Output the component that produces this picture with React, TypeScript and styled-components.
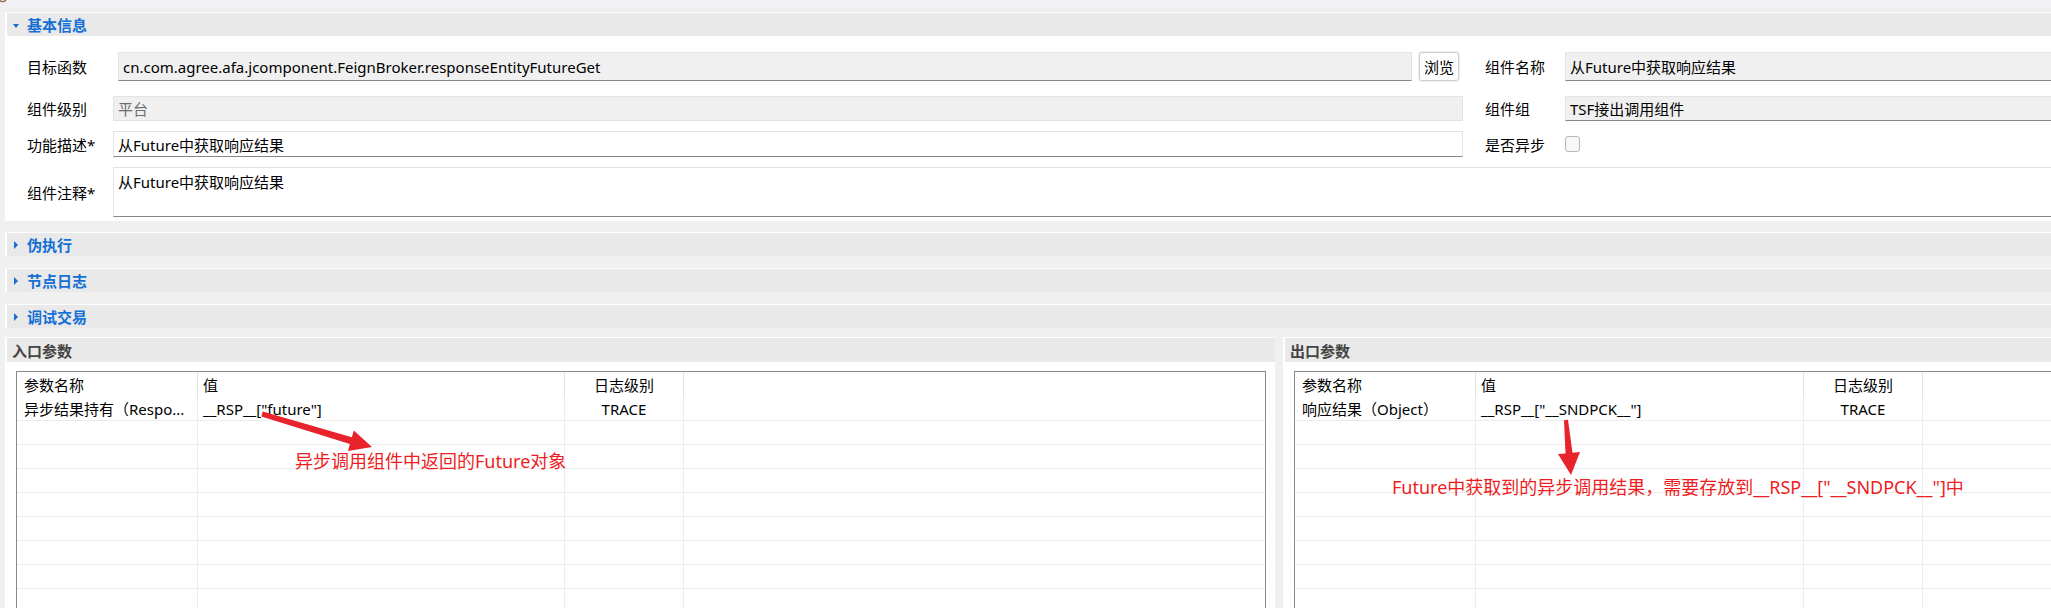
import React from 'react';
import styled, { createGlobalStyle } from 'styled-components';

const FONT = `"Noto Sans", "Noto Sans CJK SC", sans-serif`;

const GlobalStyle = createGlobalStyle`
  html, body { margin: 0; padding: 0; background: #f0f0f0; }
  body { font-family: ${FONT}; font-size: 15px; color: #000; }
  #root { width: 2051px; height: 608px; overflow: hidden; position: relative; }
  * { box-sizing: border-box; }
`;

const TopStrip = styled.div`
  height: 12px;
  position: relative;
  background: linear-gradient(to bottom, #eff0f5 0, #f3f1f4 7px, #efefef 7px, #efefef 12px);
`;

const CornerIcon = styled.svg`
  position: absolute;
  left: 0;
  top: 0;
`;

const Page = styled.div`
  display: flex;
  flex-direction: column;
  padding-left: 5px;
  width: 2080px;
`;

const Panel = styled.section<{ $mt?: number }>`
  background: #fff;
  border-top: 1px solid #fff;
  border-left: 2px solid #fff;
  margin-top: ${(p) => p.$mt ?? 0}px;
`;

const Header = styled.div<{ $plain?: boolean }>`
  height: ${(p) => (p.$plain ? 24 : 23)}px;
  background: #e9e9e9;
  display: flex;
  align-items: center;
  padding-left: ${(p) => (p.$plain ? 5 : 6)}px;
  gap: 8px;
  font-weight: bold;
  font-size: 15px;
  color: ${(p) => (p.$plain ? '#444' : '#1570d5')};
`;

const Caret = styled.span<{ $open?: boolean }>`
  width: 0;
  height: 0;
  ${(p) =>
    p.$open
      ? `border-left: 3px solid transparent; border-right: 3px solid transparent; border-top: 4px solid #1570d5; margin-top: 2px;`
      : `border-top: 4px solid transparent; border-bottom: 4px solid transparent; border-left: 4px solid #1570d5; margin-left: 1px; margin-right: 1px;`}
`;

const FormBody = styled.div`
  padding: 16px 0 4px 20px;
  display: flex;
  flex-direction: column;
`;

const FormRow = styled.div<{ $h: number; $mb: number }>`
  display: grid;
  grid-template-columns: 86px 1350px 102px 1fr;
  height: ${(p) => p.$h}px;
  margin-bottom: ${(p) => p.$mb}px;
  align-items: center;
`;

const Label = styled.div<{ $second?: boolean }>`
  font-size: 15px;
  color: #000;
  white-space: nowrap;
  padding-left: ${(p) => (p.$second ? 22 : 0)}px;
`;

const FieldWrap = styled.div`
  display: flex;
  align-items: center;
  height: 100%;
  gap: 7px;
  padding-left: 5px;
  padding-right: 4px;
`;

const Field = styled.div<{ $tone: 'ro' | 'disabled' | 'edit'; $top?: boolean }>`
  height: 100%;
  flex: 1;
  min-width: 0;
  display: flex;
  align-items: ${(p) => (p.$top ? 'flex-start' : 'center')};
  padding: ${(p) => (p.$top ? '3px 4px' : '0 4px')};
  background: ${(p) => (p.$tone === 'edit' ? '#fff' : '#f0f0f0')};
  border: 1px solid #e3e3e3;
  border-bottom-color: ${(p) => (p.$tone === 'disabled' ? '#e3e3e3' : '#878787')};
  color: ${(p) => (p.$tone === 'disabled' ? '#6d6d6d' : '#000')};
  font-size: 15px;
  white-space: nowrap;
  overflow: hidden;
`;

const WideField = styled(Field)`
  grid-column: 2 / -1;
`;

const Button = styled.button`
  height: 29px;
  width: 40px;
  padding: 0;
  font-family: ${FONT};
  font-size: 15px;
  color: #000;
  background: #fdfdfd;
  border: 1px solid #cfcfcf;
  border-radius: 3px;
  box-shadow: 0 0 0 1px #eeeeee;
`;

const Check = styled.span`
  width: 15px;
  height: 16px;
  border: 1px solid #b9b9b9;
  border-radius: 3px;
  background: #f7f7f7;
  display: block;
`;

const ParamsArea = styled.div`
  display: grid;
  grid-template-columns: 1270px 1fr;
  column-gap: 8px;
  margin-top: 9px;
`;

const ParamBody = styled.div`
  padding: 9px 9px 0 9px;
`;

const Table = styled.div`
  position: relative;
  border: 1px solid #8a8a8a;
  border-bottom: none;
  background: #fff;
`;

const TRow = styled.div<{ $cols: string; $head?: boolean }>`
  display: grid;
  grid-template-columns: ${(p) => p.$cols};
  height: ${(p) => (p.$head ? 25 : 24)}px;
  border-bottom: ${(p) => (p.$head ? 'none' : '1px solid #ececec')};
`;

const Cell = styled.div<{ $head?: boolean; $center?: boolean; $pl?: number; $last?: boolean }>`
  display: flex;
  align-items: center;
  justify-content: ${(p) => (p.$center ? 'center' : 'flex-start')};
  padding-left: ${(p) => (p.$center ? 0 : p.$pl ?? 5)}px;
  border-right: ${(p) => (p.$last ? 'none' : `1px solid ${p.$head ? '#e2e2e2' : '#e9edf4'}`)};
  font-size: 15px;
  color: #000;
  white-space: nowrap;
  overflow: hidden;
`;

const Note = styled.div<{ $x: number; $y: number }>`
  position: absolute;
  left: ${(p) => p.$x}px;
  top: ${(p) => p.$y}px;
  line-height: 24px;
  font-size: 18px;
  color: #ee1d24;
  white-space: nowrap;
  font-family: ${FONT};
`;

const ArrowSvg = styled.svg`
  position: absolute;
  left: 0;
  top: 0;
  pointer-events: none;
`;

type Row = [string, string, string];

const ParamTable: React.FC<{
  cols: string;
  row: Row;
  children?: React.ReactNode;
}> = ({ cols, row, children }) => {
  const empty = Array.from({ length: 9 });
  return (
    <Table>
      <TRow $cols={cols} $head>
        <Cell $head $pl={7}>参数名称</Cell>
        <Cell $head>值</Cell>
        <Cell $head $center>日志级别</Cell>
        <Cell $head $last />
      </TRow>
      <TRow $cols={cols}>
        <Cell $pl={7}>{row[0]}</Cell>
        <Cell>{row[1]}</Cell>
        <Cell $center>{row[2]}</Cell>
        <Cell $last />
      </TRow>
      {empty.map((_, i) => (
        <TRow $cols={cols} key={i}>
          <Cell />
          <Cell />
          <Cell />
          <Cell $last />
        </TRow>
      ))}
      {children}
    </Table>
  );
};

export default function App() {
  return (
    <>
      <GlobalStyle />
      <TopStrip>
        <CornerIcon width="8" height="5" viewBox="0 0 8 5">
          <path d="M0 0.5 Q3 3 6 0" stroke="#8a6d4e" strokeWidth="1.4" fill="none" />
        </CornerIcon>
      </TopStrip>
      <Page>
        <Panel>
          <Header>
            <Caret $open />
            基本信息
          </Header>
          <FormBody>
            <FormRow $h={26} $mb={18}>
              <Label>目标函数</Label>
              <FieldWrap>
                <Field $tone="ro">cn.com.agree.afa.jcomponent.FeignBroker.responseEntityFutureGet</Field>
                <Button>浏览</Button>
              </FieldWrap>
              <Label $second>组件名称</Label>
              <Field $tone="ro">从Future中获取响应结果</Field>
            </FormRow>
            <FormRow $h={25} $mb={10}>
              <Label>组件级别</Label>
              <Field $tone="disabled">平台</Field>
              <Label $second>组件组</Label>
              <Field $tone="ro">TSF接出调用组件</Field>
            </FormRow>
            <FormRow $h={26} $mb={10}>
              <Label>功能描述*</Label>
              <Field $tone="edit">从Future中获取响应结果</Field>
              <Label $second>是否异步</Label>
              <Check />
            </FormRow>
            <FormRow $h={50} $mb={0}>
              <Label>组件注释*</Label>
              <WideField $tone="edit" $top>
                从Future中获取响应结果
              </WideField>
            </FormRow>
          </FormBody>
        </Panel>

        <Panel $mt={11}>
          <Header>
            <Caret />
            伪执行
          </Header>
        </Panel>
        <Panel $mt={12}>
          <Header>
            <Caret />
            节点日志
          </Header>
        </Panel>
        <Panel $mt={12}>
          <Header>
            <Caret />
            调试交易
          </Header>
        </Panel>

        <ParamsArea>
          <Panel>
            <Header $plain>入口参数</Header>
            <ParamBody>
              <ParamTable cols="181px 367px 119px 1fr" row={['异步结果持有（Respo...', '__RSP__["future"]', 'TRACE']}>
                <ArrowSvg width="600" height="120" viewBox="17 372 600 120">
                  <polygon
                    points="262.7,411.6 351.9,437.3 353.8,430.5 372,447 348.0,450.9 349.9,444.1 261.3,416.4"
                    fill="#e8232b"
                  />
                </ArrowSvg>
                <Note $x={278} $y={77}>异步调用组件中返回的Future对象</Note>
              </ParamTable>
            </ParamBody>
          </Panel>
          <Panel>
            <Header $plain>出口参数</Header>
            <ParamBody>
              <ParamTable cols="181px 328px 119px 1fr" row={['响应结果（Object）', '__RSP__["__SNDPCK__"]', 'TRACE']}>
                <ArrowSvg width="400" height="140" viewBox="1295 372 400 140">
                  <polygon
                    points="1568.0,419.8 1572.5,452.8 1580.0,452.1 1571,475 1558.0,454.1 1565.5,453.4 1564.0,420.2"
                    fill="#e8232b"
                  />
                </ArrowSvg>
                <Note $x={97} $y={103}>Future中获取到的异步调用结果，需要存放到__RSP__["__SNDPCK__"]中</Note>
              </ParamTable>
            </ParamBody>
          </Panel>
        </ParamsArea>
      </Page>
    </>
  );
}
